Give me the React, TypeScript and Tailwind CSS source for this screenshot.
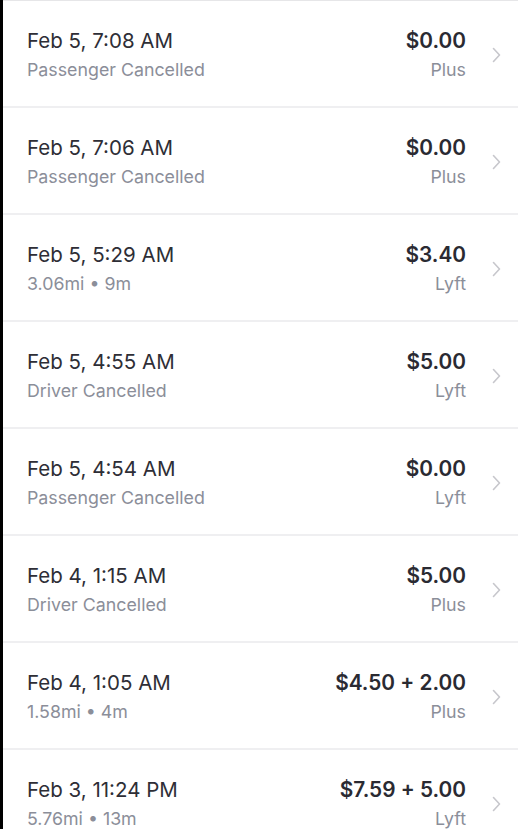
import React from "react";

type Ride = { date: string; sub: string; price: string; type: string };

const rides: Ride[] = [
  { date: "Feb 5, 7:08 AM", sub: "Passenger Cancelled", price: "$0.00", type: "Plus" },
  { date: "Feb 5, 7:06 AM", sub: "Passenger Cancelled", price: "$0.00", type: "Plus" },
  { date: "Feb 5, 5:29 AM", sub: "3.06mi • 9m", price: "$3.40", type: "Lyft" },
  { date: "Feb 5, 4:55 AM", sub: "Driver Cancelled", price: "$5.00", type: "Lyft" },
  { date: "Feb 5, 4:54 AM", sub: "Passenger Cancelled", price: "$0.00", type: "Lyft" },
  { date: "Feb 4, 1:15 AM", sub: "Driver Cancelled", price: "$5.00", type: "Plus" },
  { date: "Feb 4, 1:05 AM", sub: "1.58mi • 4m", price: "$4.50 + 2.00", type: "Plus" },
  { date: "Feb 3, 11:24 PM", sub: "5.76mi • 13m", price: "$7.59 + 5.00", type: "Lyft" },
];

function Chevron() {
  return (
    <svg width="9" height="16" viewBox="0 0 9 16" className="shrink-0">
      <polyline points="1.5,1.5 7.5,8 1.5,14.5" fill="none" stroke="#c7c7cc" strokeWidth="1.6" strokeLinecap="round" strokeLinejoin="round" />
    </svg>
  );
}

export default function App() {
  return (
    <div
      className="w-[518px] h-[829px] overflow-hidden bg-black flex"
      style={{ fontFamily: "Inter, 'Liberation Sans', sans-serif" }}
    >
      <div className="w-[3px] shrink-0 bg-black" />
      <div className="flex-1 bg-white flex flex-col">
        <div className="h-[1px] bg-[#e6e6e8] shrink-0" />
        {rides.map((r, i) => (
          <div
            key={i}
            className="h-[107px] shrink-0 flex items-center border-b-2 border-[#efeff1] pl-[24px] pr-[17px]"
          >
            <div className="flex-1 flex flex-col gap-[6px] pt-[2px]">
              <div className="text-[20.5px] leading-[25px] text-[#2e2e36]">{r.date}</div>
              <div className="text-[17.8px] leading-[22px] text-[#8b8e99]">{r.sub}</div>
            </div>
            <div className="flex flex-col items-end gap-[6px] pt-[2px]">
              <div className="text-[20.8px] leading-[25px] font-semibold text-[#2a2a32]">{r.price}</div>
              <div className="text-[17.8px] leading-[22px] text-[#8b8e99]">{r.type}</div>
            </div>
            <div className="ml-[26px] mt-[2px]">
              <Chevron />
            </div>
          </div>
        ))}
      </div>
    </div>
  );
}
